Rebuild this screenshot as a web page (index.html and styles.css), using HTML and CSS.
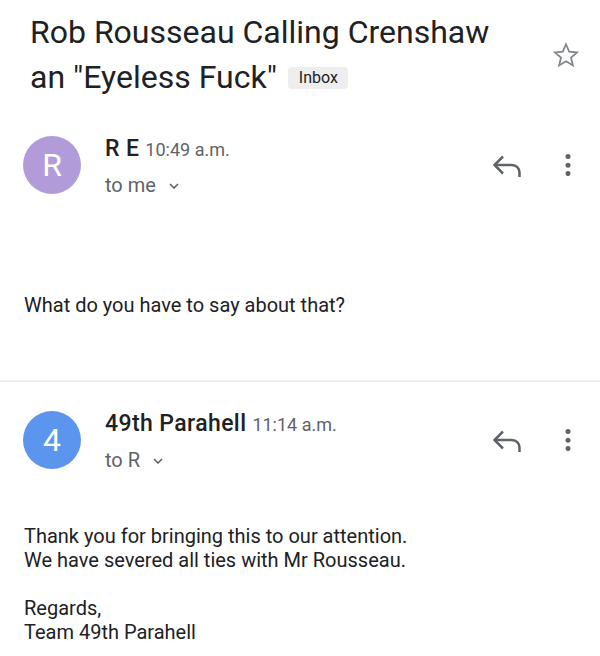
FILE: index.html
```html
<!DOCTYPE html>
<html>
<head>
<meta charset="utf-8">
<link rel="stylesheet" href="styles.css">
</head>
<body>
<header class="subject">
  <h1 class="title">Rob Rousseau Calling Crenshaw<br>an "Eyeless Fuck" <span class="chip">Inbox</span></h1>
  <svg class="star" viewBox="0 0 24 24" width="28" height="28"><path d="M12 2.8l2.7 6.3 6.8.6-5.2 4.5 1.6 6.7L12 17.3l-5.9 3.6 1.6-6.7-5.2-4.5 6.8-.6z" fill="none" stroke="#80868b" stroke-width="1.5" stroke-linejoin="miter"/></svg>
</header>

<section class="msg msg-first">
  <div class="msg-head">
    <div class="avatar avatar-purple">R</div>
    <div class="meta">
      <div class="from"><span class="name">R E</span> <span class="time">10:49 a.m.</span></div>
      <div class="to">to me <svg class="chev" viewBox="0 0 10 6" width="10" height="6"><polyline points="1,1 5,5 9,1" fill="none" stroke="#5f6368" stroke-width="1.6"/></svg></div>
    </div>
    <div class="actions">
      <svg class="reply" viewBox="0 0 28 22" width="28" height="22"><path d="M10 1.5 L1.5 10 L10 18.5" fill="none" stroke="#5f6368" stroke-width="2.5" stroke-linejoin="miter"/><path d="M2 10 H19 a7.5 7.5 0 0 1 7.5 7.5 V22" fill="none" stroke="#5f6368" stroke-width="2.5"/></svg>
      <svg class="more" viewBox="0 0 6 22" width="6" height="22"><circle cx="3" cy="2.6" r="2.5" fill="#5f6368"/><circle cx="3" cy="11.3" r="2.5" fill="#5f6368"/><circle cx="3" cy="19.6" r="2.5" fill="#5f6368"/></svg>
    </div>
  </div>
  <div class="body body-first">What do you have to say about that?</div>
</section>

<hr class="divider">

<section class="msg">
  <div class="msg-head">
    <div class="avatar avatar-blue">4</div>
    <div class="meta">
      <div class="from"><span class="name">49th Parahell</span> <span class="time">11:14 a.m.</span></div>
      <div class="to">to R <svg class="chev" viewBox="0 0 10 6" width="10" height="6"><polyline points="1,1 5,5 9,1" fill="none" stroke="#5f6368" stroke-width="1.6"/></svg></div>
    </div>
    <div class="actions">
      <svg class="reply" viewBox="0 0 28 22" width="28" height="22"><path d="M10 1.5 L1.5 10 L10 18.5" fill="none" stroke="#5f6368" stroke-width="2.5" stroke-linejoin="miter"/><path d="M2 10 H19 a7.5 7.5 0 0 1 7.5 7.5 V22" fill="none" stroke="#5f6368" stroke-width="2.5"/></svg>
      <svg class="more" viewBox="0 0 6 22" width="6" height="22"><circle cx="3" cy="2.6" r="2.5" fill="#5f6368"/><circle cx="3" cy="11.3" r="2.5" fill="#5f6368"/><circle cx="3" cy="19.6" r="2.5" fill="#5f6368"/></svg>
    </div>
  </div>
  <div class="body body-second">Thank you for bringing this to our attention.<br>We have severed all ties with Mr Rousseau.<br><br>Regards,<br>Team 49th Parahell</div>
</section>
</body>
</html>
```

FILE: styles.css
```css
html, body {
  margin: 0;
  padding: 0;
  background: #ffffff;
}
body {
  width: 600px;
  font-family: Roboto, "Liberation Sans", sans-serif;
  color: #202124;
}
.subject {
  display: flex;
  align-items: flex-start;
  justify-content: space-between;
  padding: 10px 20px 0 30px;
}
.title {
  margin: 0;
  font-size: 32px;
  font-weight: 400;
  line-height: 45px;
  color: #202124;
}
.chip {
  display: inline-block;
  vertical-align: 5px;
  font-size: 16px;
  line-height: 22px;
  padding: 0 10px 0 11px;
  background: #eeeeee;
  border-radius: 4px;
  color: #202124;
  margin-left: 3px;
}
.star {
  margin-top: 31px;
  flex-shrink: 0;
}
.msg-first {
  margin-top: 36px;
}
.msg-head {
  display: flex;
  align-items: flex-start;
  padding: 0 29px 0 23px;
}
.avatar {
  width: 58px;
  height: 58px;
  border-radius: 50%;
  flex-shrink: 0;
  color: #ffffff;
  font-size: 32px;
  line-height: 58px;
  text-align: center;
}
.avatar-purple { background: #b19bd9; }
.avatar-blue { background: #5c95ed; }
.meta {
  flex: 1;
  margin-left: 24px;
}
.from {
  line-height: 26px;
  white-space: nowrap;
}
.name {
  font-size: 23px;
  font-weight: 500;
  letter-spacing: 0.4px;
  color: #202124;
}
.time {
  font-size: 18px;
  color: #5f6368;
  margin-left: 2px;
}
.to {
  margin-top: 9px;
  font-size: 20px;
  line-height: 24px;
  color: #5f6368;
}
.chev {
  margin-left: 8px;
  vertical-align: 3px;
}
.actions {
  display: flex;
  align-items: center;
  height: 58px;
  gap: 44px;
}
.reply {
  margin-top: 2px;
}
.body {
  padding-left: 24px;
  font-size: 20px;
  line-height: 24px;
  color: #202124;
}
.body-first {
  margin-top: 96px;
}
.body-second {
  margin-top: 52px;
}
.divider {
  border: 0;
  height: 2px;
  background: #eeeeee;
  margin: 63px 0 29px 0;
}
```
